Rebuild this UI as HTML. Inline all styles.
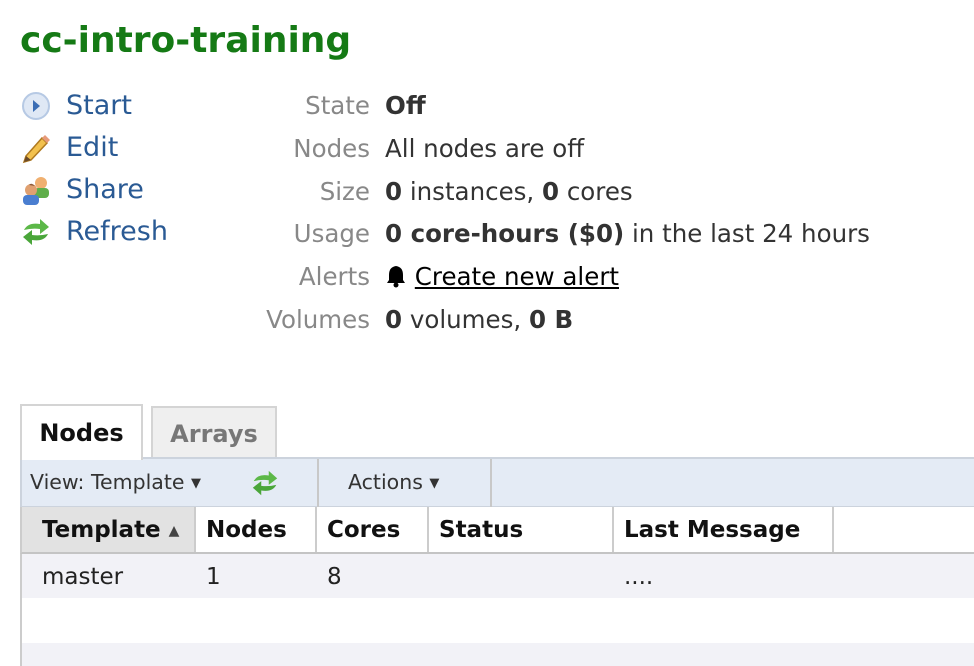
<!DOCTYPE html>
<html><head><meta charset="utf-8"><style>
body{margin:0;width:974px;height:666px;overflow:hidden;background:#fff;font-family:"DejaVu Sans","Liberation Sans",sans-serif;position:relative}
.a{position:absolute;white-space:nowrap}
h1{position:absolute;left:20px;top:20px;margin:0;font-size:36px;font-weight:bold;color:#157a15}
.act{position:absolute;left:66px;font-size:27px;color:#2a5a94}
.ic{position:absolute;left:20px;width:32px;height:32px}
.lab{position:absolute;right:604px;font-size:24.5px;color:#888;text-align:right}
.val{position:absolute;left:385px;font-size:24.5px;color:#333}
.val b{color:#333}
.cell{position:absolute;top:507px;height:45px;line-height:46px;font-size:23px;font-weight:bold;color:#111;border-right:2px solid #ccc;padding-left:20px;box-sizing:border-box}
.td{position:absolute;top:564px;font-size:23px;color:#222}
</style></head><body>
<h1>cc-intro-training</h1>

<svg class="ic" style="top:90px" viewBox="0 0 32 32"><circle cx="16" cy="16" r="13" fill="#dfe8f5" stroke="#b6c9e4" stroke-width="2"/><path d="M13 10 L20 16 L13 22Z" fill="#3a6db5"/></svg>
<div class="act" style="top:90px">Start</div>
<svg class="ic" style="top:132px" viewBox="0 0 32 32"><path d="M6 24 L22 6 L27 11 L11 28 L4 30Z" fill="#f2c14e" stroke="#b07a20" stroke-width="1.5"/><path d="M4 30 L6 24 L11 28Z" fill="#6b4a2a"/><path d="M22 6 L25 3 L30 8 L27 11Z" fill="#e79a7a"/></svg>
<div class="act" style="top:132px">Edit</div>
<svg class="ic" style="top:174px" viewBox="0 0 32 32"><circle cx="21" cy="9" r="6" fill="#f0b070"/><rect x="14" y="14" width="15" height="10" rx="4" fill="#5fae4a"/><circle cx="11" cy="16" r="6" fill="#e0a070"/><path d="M9 11 Q11 8 15 12" fill="#8a5a3a"/><rect x="3" y="21" width="16" height="10" rx="4" fill="#4a7ed0"/></svg>
<div class="act" style="top:174px">Share</div>
<svg class="ic" style="top:216px" viewBox="0 0 32 32"><path d="M4 14 Q8 6 20 8 L20 3 L29 11 L20 18 L20 13 Q12 12 4 14Z" fill="#5cb848"/><path d="M28 18 Q24 26 12 24 L12 29 L3 21 L12 14 L12 19 Q20 20 28 18Z" fill="#4aa63a"/></svg>
<div class="act" style="top:216px">Refresh</div>

<div class="lab" style="top:91px">State</div><div class="val" style="top:91px"><b>Off</b></div>
<div class="lab" style="top:134px">Nodes</div><div class="val" style="top:134px">All nodes are off</div>
<div class="lab" style="top:177px">Size</div><div class="val" style="top:177px"><b>0</b> instances, <b>0</b> cores</div>
<div class="lab" style="top:219px">Usage</div><div class="val" style="top:219px"><b>0 core-hours ($0)</b> in the last 24 hours</div>
<div class="lab" style="top:262px">Alerts</div><div class="val" style="top:262px"><svg width="22" height="24" viewBox="0 0 22 24" style="vertical-align:-3px"><path d="M11 2 Q4 3 4 11 L4 16 L2 19 L20 19 L18 16 L18 11 Q18 3 11 2Z" fill="#000"/><circle cx="11" cy="21" r="2.5" fill="#000"/></svg> <span style="color:#000;text-decoration:underline">Create new alert</span></div>
<div class="lab" style="top:305px">Volumes</div><div class="val" style="top:305px"><b>0</b> volumes, <b>0 B</b></div>

<div class="a" style="left:20px;top:404px;width:123px;height:56px;border:2px solid #d4d4d4;border-bottom:none;background:#fff;box-sizing:border-box;font-size:24px;font-weight:bold;color:#111;text-align:center;line-height:54px;z-index:2">Nodes</div>
<div class="a" style="left:151px;top:406px;width:126px;height:52px;border:2px solid #d4d4d4;border-bottom:none;background:#efefef;box-sizing:border-box;font-size:24px;font-weight:bold;color:#777;text-align:center;line-height:52px">Arrays</div>

<div class="a" style="left:20px;top:457px;width:960px;height:51px;background:#e4ebf5;border:2px solid #ccd3dd;box-sizing:border-box"></div>
<div class="a" style="left:317px;top:459px;width:2px;height:48px;background:#c8c8c8"></div>
<div class="a" style="left:490px;top:459px;width:2px;height:48px;background:#c8c8c8"></div>
<div class="a" style="left:30px;top:470px;font-size:20.5px;color:#333">View: Template <span style="font-size:13px;vertical-align:2px">▼</span></div>
<svg class="a" style="left:249px;top:468px" width="32" height="30" viewBox="0 0 32 32"><path d="M4 14 Q8 6 20 8 L20 3 L29 11 L20 18 L20 13 Q12 12 4 14Z" fill="#5cb848"/><path d="M28 18 Q24 26 12 24 L12 29 L3 21 L12 14 L12 19 Q20 20 28 18Z" fill="#4aa63a"/></svg>
<div class="a" style="left:348px;top:470px;font-size:20.5px;color:#333">Actions <span style="font-size:13px;vertical-align:2px">▼</span></div>

<div class="a" style="left:20px;top:507px;width:960px;height:47px;background:#fff;border-bottom:2px solid #c4c4c4;border-left:2px solid #ccc;box-sizing:border-box"></div>
<div class="cell" style="left:22px;width:174px;background:#e2e2e2">Template <span style="font-size:14px;color:#444;vertical-align:2px">▲</span></div>
<div class="cell" style="left:196px;width:121px;padding-left:10px">Nodes</div>
<div class="cell" style="left:317px;width:112px;padding-left:10px">Cores</div>
<div class="cell" style="left:429px;width:185px;padding-left:10px">Status</div>
<div class="cell" style="left:614px;width:220px;padding-left:10px">Last Message</div>

<div class="a" style="left:20px;top:554px;width:960px;height:112px;border-left:2px solid #ccc;box-sizing:border-box;background:linear-gradient(#f2f2f7 0 44px,#fff 44px 89px,#f2f2f7 89px)"></div>
<div class="td" style="left:42px">master</div>
<div class="td" style="left:206px">1</div>
<div class="td" style="left:327px">8</div>
<div class="td" style="left:624px">....</div>
</body></html>
